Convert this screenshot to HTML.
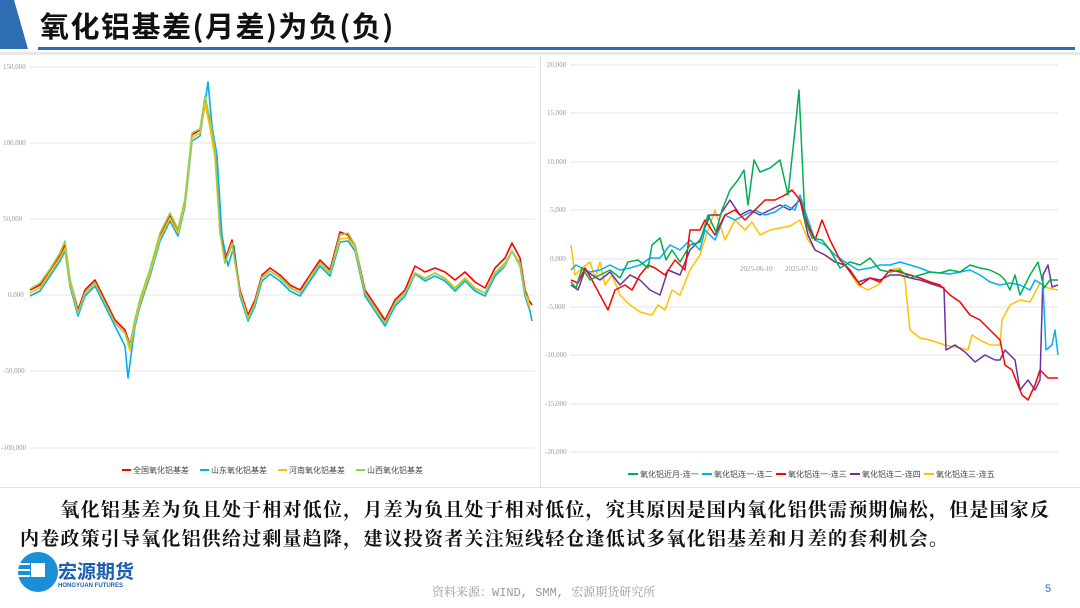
<!DOCTYPE html>
<html><head><meta charset="utf-8"><style>
body{margin:0;width:1080px;height:608px;background:#fff;position:relative;overflow:hidden;font-family:"Liberation Sans","Noto Sans CJK SC",sans-serif}
.t{position:absolute;left:40px;top:4px;font-size:29px;font-weight:bold;letter-spacing:1.5px;color:#111;font-family:"Noto Sans CJK SC",sans-serif}
.p{position:absolute;left:20px;width:1060px;font-size:19px;font-weight:bold;color:#111;line-height:29px;font-family:"Noto Serif CJK SC",serif;letter-spacing:1.2px;white-space:nowrap}
.ax{font-size:7px;fill:#999;font-family:"Liberation Serif",serif}
</style></head><body>
<svg width="1080" height="608" style="position:absolute;left:0;top:0">
<polygon points="0,0 14,0 28,49 0,49" fill="#2e6db4"/>
<rect x="38" y="47" width="1037" height="3" fill="#2e6db4"/>
<rect x="0" y="52" width="1080" height="3" fill="#e8e8e8"/>
<rect x="540" y="55" width="1" height="432" fill="#e0e0e0"/>
<rect x="0" y="487" width="1080" height="1" fill="#e0e0e0"/>
<g stroke="#e6e6e6" stroke-width="1">
<line x1="30" y1="67" x2="535" y2="67"/><line x1="30" y1="143" x2="535" y2="143"/><line x1="30" y1="219" x2="535" y2="219"/><line x1="30" y1="295" x2="535" y2="295"/><line x1="30" y1="371" x2="535" y2="371"/><line x1="30" y1="448" x2="535" y2="448"/>
</g>
<g class="ax"><text x="3" y="69">150,000</text><text x="3" y="145">100,000</text><text x="3" y="221">50,000</text><text x="8" y="297">0,000</text><text x="3" y="373">-50,000</text><text x="1" y="450">-100,000</text></g>
<g fill="none" stroke-width="1.6" stroke-linejoin="round">
<polyline stroke="#00b0f0" transform="translate(0,6)" points="30,290 40,285 50,270 60,255 65,245 70,280 78,310 85,290 95,280 105,300 115,320 125,340 128,372 135,320 140,300 150,270 160,235 170,215 178,230 185,200 192,135 200,130 208,76 212,120 217,150 222,230 228,260 234,240 240,290 248,315 255,300 262,275 270,268 280,275 290,285 300,290 310,275 320,260 330,270 340,236 348,235 355,245 365,290 375,305 385,320 395,300 405,290 415,268 425,275 435,270 445,275 455,285 465,275 475,285 485,290 495,270 505,260 512,245 520,260 525,290 530,305 532,315"/>
<polyline stroke="#ff0000" points="30,290 40,285 50,270 60,255 65,245 70,280 78,310 85,290 95,280 105,300 115,320 125,330 130,345 135,320 140,300 150,270 160,235 170,215 178,230 185,200 192,135 200,130 205,105 210,120 215,150 220,230 225,260 232,240 240,290 248,315 255,300 262,275 270,268 280,275 290,285 300,290 310,275 320,260 330,270 340,232 348,235 355,245 365,290 375,305 385,320 395,300 405,290 415,266 425,272 435,268 445,272 455,280 465,272 475,282 485,288 495,268 505,258 512,243 520,258 525,290 530,302 532,305"/>
<polyline stroke="#ffc000" transform="translate(0,3)" points="30,290 40,285 50,270 60,255 65,245 70,280 78,310 85,290 95,280 105,300 115,320 125,330 130,348 135,320 140,300 150,270 160,235 170,215 178,230 185,200 192,135 200,130 205,100 210,125 215,155 220,230 225,260 232,240 240,290 248,315 255,300 262,275 270,268 280,275 290,285 300,290 310,275 320,260 330,270 340,236 348,235 355,245 365,290 375,305 385,320 395,300 405,290 415,270 425,275 435,270 445,275 455,285 465,275 475,285 485,290 495,270 505,262 512,248 520,262 525,290 530,305"/>
<polyline stroke="#92d050" transform="translate(0,1)" points="30,288 40,282 50,268 60,252 65,240 70,278 78,312 85,292 95,282 105,302 115,322 125,332 130,345 135,318 140,298 150,268 160,232 170,212 178,228 185,198 192,132 200,128 205,95 210,118 215,148 220,230 225,262 232,244 240,292 248,318 255,302 262,276 270,270 280,276 290,286 300,292 310,276 320,262 330,272 340,234 348,232 355,244 365,292 375,308 385,322 395,302 405,292 415,272 425,278 435,272 445,278 455,288 465,278 475,288 485,292 495,272 505,262 512,250 520,262 525,292 530,300"/>
</g>
<g font-size="8" fill="#444" font-family="'Noto Sans CJK SC',sans-serif">
<rect x="122" y="469" width="9" height="2" fill="#f00"/><text x="133" y="473">全国氧化铝基差</text>
<rect x="200" y="469" width="9" height="2" fill="#00b0f0"/><text x="211" y="473">山东氧化铝基差</text>
<rect x="278" y="469" width="9" height="2" fill="#ffc000"/><text x="289" y="473">河南氧化铝基差</text>
<rect x="356" y="469" width="9" height="2" fill="#92d050"/><text x="367" y="473">山西氧化铝基差</text>
</g>
<g stroke="#e6e6e6" stroke-width="1">
<line x1="570" y1="65" x2="1058" y2="65"/><line x1="570" y1="113" x2="1058" y2="113"/><line x1="570" y1="162" x2="1058" y2="162"/><line x1="570" y1="210" x2="1058" y2="210"/><line x1="570" y1="259" x2="1058" y2="259"/><line x1="570" y1="307" x2="1058" y2="307"/><line x1="570" y1="355" x2="1058" y2="355"/><line x1="570" y1="404" x2="1058" y2="404"/><line x1="570" y1="452" x2="1058" y2="452"/>
</g>
<g class="ax"><text x="547" y="67">20,000</text><text x="547" y="115">15,000</text><text x="547" y="164">10,000</text><text x="550" y="212">5,000</text><text x="550" y="261">0,000</text><text x="547" y="309">-5,000</text><text x="545" y="357">-10,000</text><text x="545" y="406">-15,000</text><text x="545" y="454">-20,000</text>
<text x="740" y="271">2025-06-10</text><text x="785" y="271">2025-07-10</text></g>
<g fill="none" stroke-width="1.5" stroke-linejoin="round">
<polyline stroke="#ffc000" points="571,245 575,275 582,268 590,262 595,278 600,262 605,285 612,275 620,295 630,305 640,312 652,315 658,305 665,310 672,290 680,295 690,270 700,255 708,230 715,210 725,240 735,220 745,230 752,222 760,235 770,230 780,228 790,226 800,220 808,240 815,250 825,255 835,262 845,265 858,285 868,290 878,285 890,270 900,268 905,280 910,330 920,338 930,340 945,345 960,348 968,350 972,335 980,340 990,345 1000,345 1002,320 1010,305 1020,300 1030,302 1040,283 1048,288 1058,290"/>
<polyline stroke="#7030a0" points="571,285 578,290 585,270 592,275 600,280 610,272 620,285 630,275 640,280 650,290 660,295 668,270 680,275 690,250 700,240 710,215 720,215 730,200 740,215 750,210 760,215 770,210 780,205 790,210 800,200 808,235 815,250 825,255 835,262 845,265 858,282 870,278 880,280 890,275 900,275 910,278 920,280 935,285 944,288 946,350 955,345 965,352 975,362 985,355 995,360 1000,360 1005,350 1015,360 1020,390 1028,380 1035,390 1040,380 1043,275 1048,265 1052,287 1058,285"/>
<polyline stroke="#00b0f0" points="571,270 576,265 582,268 590,272 600,270 610,265 620,270 630,268 640,265 650,258 660,258 670,245 680,250 690,240 700,250 705,230 715,240 725,215 735,220 745,215 755,210 765,215 775,212 785,205 795,210 800,195 808,220 815,240 825,245 835,255 845,262 858,270 870,268 880,265 890,265 900,262 910,265 920,268 930,272 940,273 950,274 960,272 970,270 980,275 990,282 1000,285 1010,283 1020,285 1030,290 1035,280 1043,285 1046,350 1052,345 1055,330 1058,355"/>
<polyline stroke="#ff0000" points="571,280 578,283 585,268 592,280 600,295 608,310 615,290 625,285 632,290 640,275 648,265 655,268 665,275 675,260 685,270 690,230 700,230 705,220 715,235 725,215 735,210 745,220 755,210 765,200 775,200 785,195 792,190 800,200 808,225 815,240 822,220 830,240 840,260 850,270 860,285 870,278 880,282 890,270 900,272 910,275 920,278 930,282 940,285 950,295 960,302 970,315 980,320 990,330 1000,340 1005,365 1012,370 1022,395 1028,400 1035,385 1040,370 1048,378 1058,378"/>
<polyline stroke="#00b050" points="571,282 576,288 582,268 590,280 600,275 610,270 620,278 628,262 638,260 648,268 652,245 660,238 666,260 672,250 680,262 690,245 700,242 708,215 716,232 722,210 730,190 738,180 744,170 748,205 754,160 760,172 770,168 780,160 788,195 795,130 799,90 805,220 812,238 822,240 830,250 840,268 850,262 860,265 870,258 880,270 890,272 900,270 910,278 920,275 930,272 940,273 950,270 960,272 970,265 980,268 990,270 1000,275 1005,280 1010,290 1015,275 1020,295 1030,275 1038,262 1044,288 1050,280 1058,280"/>
</g>
<g font-size="8" fill="#444" font-family="'Noto Sans CJK SC',sans-serif">
<rect x="628" y="473" width="10" height="2" fill="#00b050"/><text x="640" y="477">氧化铝近月-连一</text>
<rect x="702" y="473" width="10" height="2" fill="#00b0f0"/><text x="714" y="477">氧化铝连一-连二</text>
<rect x="776" y="473" width="10" height="2" fill="#f00"/><text x="788" y="477">氧化铝连一-连三</text>
<rect x="850" y="473" width="10" height="2" fill="#7030a0"/><text x="862" y="477">氧化铝连二-连四</text>
<rect x="924" y="473" width="10" height="2" fill="#ffc000"/><text x="936" y="477">氧化铝连三-连五</text>
</g>
<circle cx="38" cy="572" r="20" fill="#1a8fd6"/>
<g stroke="#fff" stroke-width="2"><line x1="18" y1="564" x2="30" y2="564"/><line x1="18" y1="570" x2="30" y2="570"/><line x1="18" y1="576" x2="30" y2="576"/></g>
<rect x="31" y="563" width="14" height="14" fill="#fff"/>
<text x="58" y="578" font-size="19" font-weight="bold" fill="#1d5fae" font-family="'Noto Sans CJK SC',sans-serif">宏源期货</text>
<text x="58" y="587" font-size="6" font-weight="bold" fill="#1d5fae">HONGYUAN FUTURES</text>
<text x="432" y="596" font-size="12" fill="#999" font-family="'Liberation Mono','Noto Serif CJK SC',monospace">资料来源：WIND, SMM, 宏源期货研究所</text>
<text x="1045" y="592" font-size="11" fill="#2e6db4">5</text>
</svg>
<div class="t">氧化铝基差(月差)为负(负)</div>
<div class="p" style="top:494px">　　氧化铝基差为负且处于相对低位，月差为负且处于相对低位，究其原因是国内氧化铝供需预期偏松，但是国家反<br>内卷政策引导氧化铝供给过剩量趋降，建议投资者关注短线轻仓逢低试多氧化铝基差和月差的套利机会。</div>
</body></html>
